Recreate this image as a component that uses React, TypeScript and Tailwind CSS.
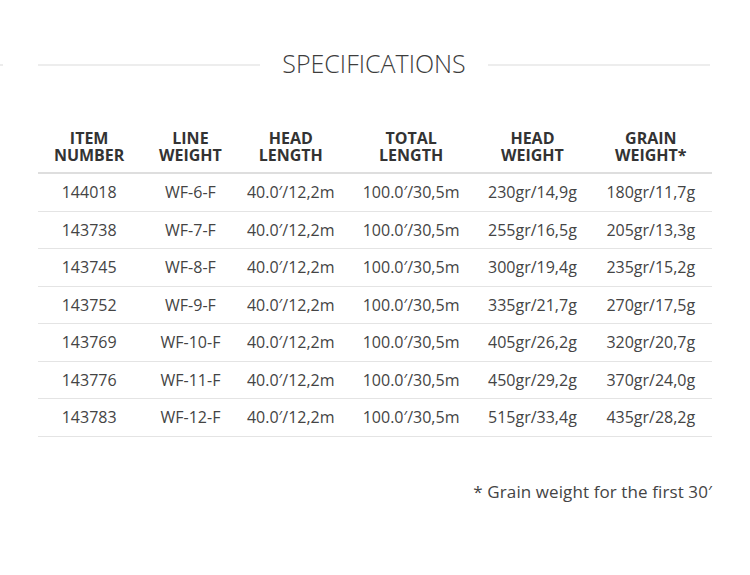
import React from "react";

const rows = [
  ["144018", "WF-6-F", "40.0′/12,2m", "100.0′/30,5m", "230gr/14,9g", "180gr/11,7g"],
  ["143738", "WF-7-F", "40.0′/12,2m", "100.0′/30,5m", "255gr/16,5g", "205gr/13,3g"],
  ["143745", "WF-8-F", "40.0′/12,2m", "100.0′/30,5m", "300gr/19,4g", "235gr/15,2g"],
  ["143752", "WF-9-F", "40.0′/12,2m", "100.0′/30,5m", "335gr/21,7g", "270gr/17,5g"],
  ["143769", "WF-10-F", "40.0′/12,2m", "100.0′/30,5m", "405gr/26,2g", "320gr/20,7g"],
  ["143776", "WF-11-F", "40.0′/12,2m", "100.0′/30,5m", "450gr/29,2g", "370gr/24,0g"],
  ["143783", "WF-12-F", "40.0′/12,2m", "100.0′/30,5m", "515gr/33,4g", "435gr/28,2g"],
];

const headers = [
  ["ITEM", "NUMBER"],
  ["LINE", "WEIGHT"],
  ["HEAD", "LENGTH"],
  ["TOTAL", "LENGTH"],
  ["HEAD", "WEIGHT"],
  ["GRAIN", "WEIGHT*"],
];

const widths = ["w-[102px]", "w-[100px]", "w-[100px]", "w-[140px]", "w-[102px]", "w-[128px]"];

export default function App() {
  return (
    <div
      className="w-[750px] h-[575px] bg-white overflow-hidden"
      style={{ fontFamily: '"Open Sans", "Liberation Sans", sans-serif' }}
    >
      <div className="pt-[45px] flex items-center h-[81px]">
        <div className="w-[3px] h-[2px] bg-[#ececec] mt-[3px]" />
        <div className="ml-[35px] flex-1 h-[2px] bg-[#ededed] mt-[3px]" />
        <h2 className="mx-[22px] text-[25px] leading-[36px] font-light text-[#3d3d3d]">
          SPECIFICATIONS
        </h2>
        <div className="mr-[40px] flex-1 h-[2px] bg-[#ededed] mt-[3px]" />
      </div>

      <div className="px-[38px] mt-[47px]">
        <table className="w-full table-fixed border-collapse">
          <colgroup>
            {widths.map((w, i) => (
              <col key={i} className={w} />
            ))}
          </colgroup>
          <thead>
            <tr className="border-b-2 border-[#dedede]">
              {headers.map((h, i) => (
                <th
                  key={i}
                  className={`pt-[2px] pb-[8px] text-center text-[16px] leading-[17px] font-bold text-[#333333] whitespace-nowrap ${
                    i === 5 ? "pl-[6px]" : ""
                  }`}
                >
                  <span className="block">{h[0]}</span>
                  <span className="block">{h[1]}</span>
                </th>
              ))}
            </tr>
          </thead>
          <tbody>
            {rows.map((r, i) => (
              <tr key={i} className="border-b border-[#e4e4e4]">
                {r.map((c, j) => (
                  <td
                    key={j}
                    className={`py-[6px] text-center text-[16px] leading-[24.5px] text-[#444444] whitespace-nowrap ${
                      j === 5 ? "pl-[6px]" : ""
                    }`}
                  >
                    {c}
                  </td>
                ))}
              </tr>
            ))}
          </tbody>
        </table>

        <p className="mt-[43px] text-right text-[17px] leading-[24px] text-[#444444] tracking-[0.1px]">
          * Grain weight for the first 30′
        </p>
      </div>
    </div>
  );
}
